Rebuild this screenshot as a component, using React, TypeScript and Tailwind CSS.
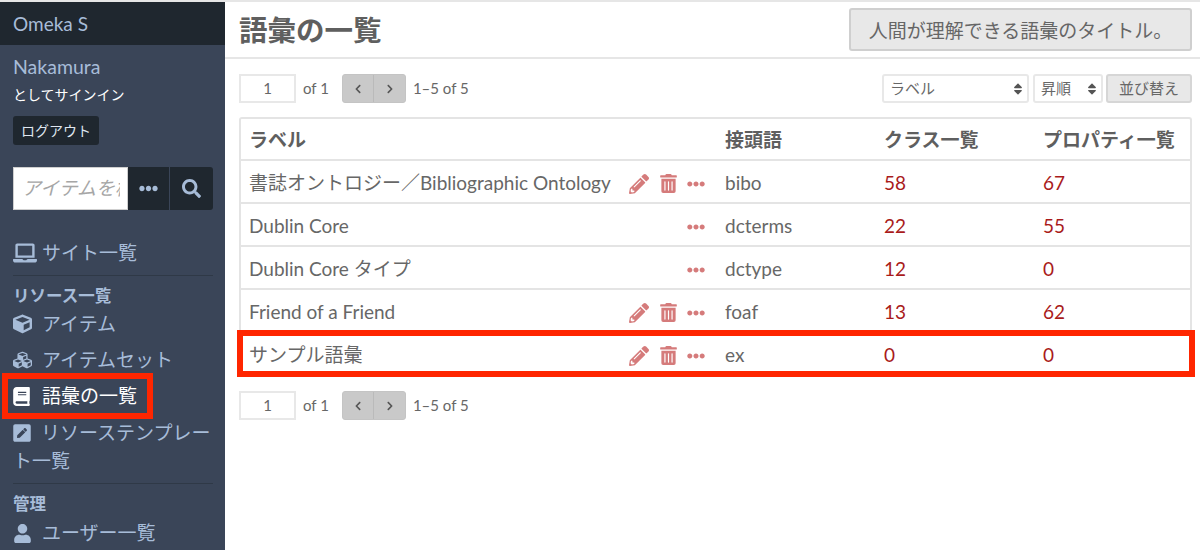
import { FaBook, FaChevronLeft, FaChevronRight, FaCube, FaCubes, FaEllipsisH, FaLaptop, FaPencilAlt, FaPenSquare, FaSearch, FaSort, FaTrashAlt, FaUser } from 'react-icons/fa';

const font = "font-['Lato','Noto_Sans_CJK_JP',sans-serif]";

const vocabularies = [
  { label: '書誌オントロジー／Bibliographic Ontology', prefix: 'bibo', classes: 58, props: 67, editable: true },
  { label: 'Dublin Core', prefix: 'dcterms', classes: 22, props: 55, editable: false },
  { label: 'Dublin Core タイプ', prefix: 'dctype', classes: 12, props: 0, editable: false },
  { label: 'Friend of a Friend', prefix: 'foaf', classes: 13, props: 62, editable: true },
  { label: 'サンプル語彙', prefix: 'ex', classes: 0, props: 0, editable: true, marked: true },
];

function Pagination() {
  return (
    <div className="flex items-center text-[15px] text-[#676767]">
      <div className="flex h-[29px] w-[57px] items-center justify-center border-2 border-[#e8e8e8] text-[15px]">1</div>
      <span className="ml-[7px]">of 1</span>
      <div className="ml-[13px] flex h-[29px] w-[64px] rounded-[3px] border border-[#c4c4c4] bg-[#c9c9c9] text-[#555]">
        <div className="flex flex-1 items-center justify-center border-r border-[#bababa]">
          <FaChevronLeft className="h-[10px] w-[10px]" />
        </div>
        <div className="flex flex-1 items-center justify-center">
          <FaChevronRight className="h-[10px] w-[10px]" />
        </div>
      </div>
      <span className="ml-[7px]">1–5 of 5</span>
    </div>
  );
}

function Sidebar() {
  const link = 'flex items-center text-[19px] leading-[36px] text-[#a7bcd8]';
  return (
    <aside className="flex w-[225px] shrink-0 flex-col overflow-hidden bg-[#3a4558]">
      <div className="flex h-[43px] shrink-0 items-center bg-[#1f272f] pl-[13px] pt-[1px] text-[19px] text-[#a7bcd8]">Omeka S</div>
      <div className="pl-[13px] pr-3">
        <div className="mt-[8px] text-[19.5px] leading-[27px] text-[#a7bcd8]">Nakamura</div>
        <div className="mt-[2px] text-[14px] leading-[25px] text-white">としてサインイン</div>
        <div className="mt-[9px] flex h-[29px] w-[86px] items-center justify-center rounded-[3px] bg-[#1f272f] text-[14px] text-[#dfe6ef]">ログアウト</div>
        <div className="mt-[22px] flex h-[43px]">
          <input
            readOnly
            placeholder="アイテムを検索"
            className="w-[115px] border border-[#cfcfcf] bg-white pl-[8px] pr-[7px] text-[19px] italic outline-none placeholder:text-[#a6a6a6]"
          />
          <div className="flex w-[42px] items-center justify-center border-r border-[#3a4558] bg-[#1f272f] text-[#a7bcd8]">
            <FaEllipsisH className="h-[19px] w-[19px]" />
          </div>
          <div className="flex w-[43px] items-center justify-center rounded-r-[3px] bg-[#1f272f] text-[#a7bcd8]">
            <FaSearch className="h-[19px] w-[19px]" />
          </div>
        </div>
        <div className={`${link} mt-[25px]`}>
          <FaLaptop className="mr-[5px] h-[20px] w-[24px]" />サイト一覧
        </div>
        <div className="mt-[4px] border-t border-[#2f3947]" />
        <div className="mt-[10px] text-[16.5px] font-bold leading-[20px] text-[#a7bcd8]">リソース一覧</div>
        <div className={link}>
          <FaCube className="mr-[10px] h-[20px] w-[19px]" />アイテム
        </div>
        <div className={link}>
          <FaCubes className="mr-[10px] h-[20px] w-[19px]" />アイテムセット
        </div>
        <div className={`${link} relative text-white`}>
          <FaBook className="mr-[12px] h-[19px] w-[17px]" />語彙の一覧
          <div className="absolute -left-[11px] -top-[5px] h-[46px] w-[151px] border-[6px] border-[#ff2600]" />
        </div>
        <div className="pt-[5px] text-[19px] leading-[28px] text-[#a7bcd8]">
          <FaPenSquare className="mr-[10px] inline h-[20px] w-[18px] align-[-3px]" />リソーステンプレート一覧
        </div>
        <div className="mt-[8px] border-t border-[#2f3947]" />
        <div className="mt-[10px] text-[16.5px] font-bold leading-[20px] text-[#a7bcd8]">管理</div>
        <div className={`${link} mt-[1px]`}>
          <FaUser className="mr-[10px] h-[19px] w-[19px]" />ユーザー一覧
        </div>
      </div>
    </aside>
  );
}

function Row({ label, prefix, classes, props, editable, marked }: (typeof vocabularies)[number]) {
  return (
    <div className={`relative grid h-[43px] grid-cols-[473px_159px_159px_1fr] items-center border-b-2 pt-[4px] text-[19px] text-[#676767] ${marked ? 'border-transparent' : 'border-[#e4e4e4]'}`}>
      <div className="flex items-center justify-between pl-[8px] pr-[9px]">
        <span className="whitespace-nowrap">{label}</span>
        <div className="flex items-center text-[#d57b7b]">
          {editable && <FaPencilAlt className="h-[20px] w-[20px]" />}
          {editable && <FaTrashAlt className="ml-[11px] h-[19px] w-[17px]" />}
          <FaEllipsisH className="ml-[10px] h-[18px] w-[18px]" />
        </div>
      </div>
      <div className="pl-[11px]">{prefix}</div>
      <div className="pl-[11px] text-[#a91b1b]">{classes}</div>
      <div className="pl-[11px] text-[#a91b1b]">{props}</div>
      {marked && <div className="absolute -left-[4px] -right-[5px] -top-[3px] h-[47px] border-[6px] border-[#ff2600]" />}
    </div>
  );
}

export default function App() {
  return (
    <div className={`${font} flex h-[550px] w-[1200px] overflow-hidden border-t-2 border-[#e6e6e6] bg-white`}>
      <Sidebar />
      <main className="flex-1 px-[8px]">
        <header className="-mx-[8px] flex h-[57px] items-center justify-between border-b-2 border-[#e6e6e6] pl-[14px] pr-[8px]">
          <h1 className="pt-[2px] text-[28.5px] font-bold text-[#5f5f5f]">語彙の一覧</h1>
          <div className="flex h-[43px] w-[343px] items-center justify-center rounded-[3px] border-2 border-[#cfcfcf] bg-[#e8e8e8] pt-[3px] text-[19px] text-[#666]">人間が理解できる語彙のタイトル。</div>
        </header>
        <div className="mt-[15px] flex items-center justify-between pl-[6px]">
          <Pagination />
          <div className="flex items-center text-[15px] text-[#676767]">
            <div className="flex h-[29px] w-[147px] items-center justify-between rounded-[3px] border-2 border-[#e8e8e8] pl-[6px] pr-[4px]">
              ラベル<FaSort className="h-[14px] w-[10px] text-[#555]" />
            </div>
            <div className="ml-[4px] flex h-[29px] w-[70px] items-center justify-between rounded-[3px] border-2 border-[#e8e8e8] pl-[6px] pr-[4px]">
              昇順<FaSort className="h-[14px] w-[10px] text-[#555]" />
            </div>
            <div className="ml-[3px] flex h-[29px] w-[86px] items-center justify-center rounded-[3px] border-2 border-[#d6d6d6] bg-[#e8e8e8]">並び替え</div>
          </div>
        </div>
        <div className="ml-[6px] mt-[14px] rounded-t-[3px] border-x-2 border-t-2 border-[#e4e4e4]">
          <div className="grid h-[42px] grid-cols-[473px_159px_159px_1fr] items-center border-b-2 border-[#e4e4e4] pt-[2px] text-[19px] font-bold text-[#5f5f5f]">
            <div className="pl-[8px]">ラベル</div>
            <div className="pl-[11px]">接頭語</div>
            <div className="pl-[11px]">クラス一覧</div>
            <div className="pl-[11px]">プロパティ一覧</div>
          </div>
          {vocabularies.map(v => <Row key={v.prefix} {...v} />)}
        </div>
        <div className="mt-[15px] pl-[6px]">
          <Pagination />
        </div>
      </main>
    </div>
  );
}
